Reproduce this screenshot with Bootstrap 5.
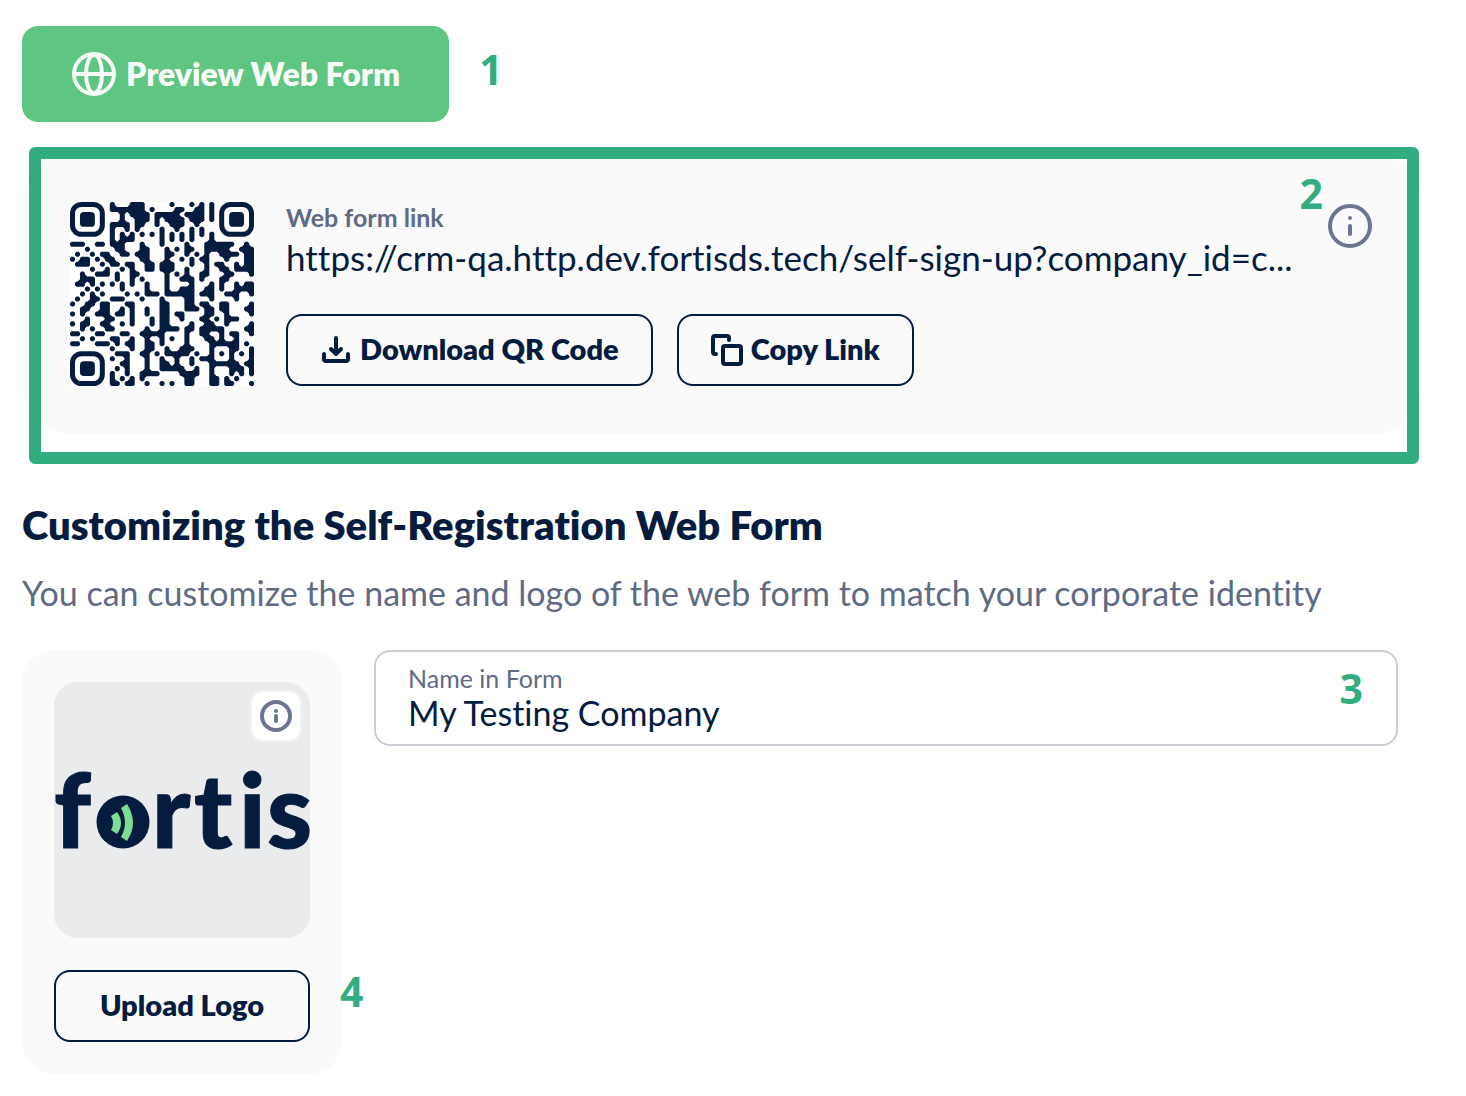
<!DOCTYPE html>
<html lang="en">
<head>
<meta charset="utf-8">
<meta name="viewport" content="width=device-width, initial-scale=1">
<title>Self-Registration Web Form</title>
<link href="https://cdn.jsdelivr.net/npm/bootstrap@5.3.0/dist/css/bootstrap.min.css" rel="stylesheet">
<style>
  :root { --navy: #051c3f; --slate: #5f6b84; --green: #5ec682; --note: #32ad80; --soft: #fafafa; }
  body { font-family: Lato, sans-serif; font-variant-ligatures: none; color: var(--navy); background: #fff; font-size: 34px; line-height: 40px; }
  .page { padding: 26px 44px 22px 22px; }
  .icon { flex: none; display: block; }
  .note { font: 700 41px/48px "Open Sans", sans-serif; color: var(--note); }
  .btn-preview { --bs-btn-bg: var(--green); --bs-btn-color: #f8fcf9; --bs-btn-hover-bg: #50b574; --bs-btn-hover-color: #fff; --bs-btn-border-color: transparent;
    height: 96px; padding: 0 49px 0 48px; border: 0; border-radius: 16px; font-size: 32px; font-weight: 800; }
  .btn-line { --bs-btn-color: var(--navy); --bs-btn-border-color: var(--navy); --bs-btn-hover-color: #fff; --bs-btn-hover-bg: var(--navy);
    --bs-btn-border-width: 2px; height: 72px; padding: 0 32px; border-radius: 16px; font-size: 29px; font-weight: 800; }
  .btn-line span { padding-bottom: 2px; }
  .link-panel { background: var(--soft); border-radius: 48px; padding: 48px; margin-top: 32px; gap: 32px; }
  .qr { width: 184px; height: 184px; background: #fff; }
  .link-label { font-size: 25px; line-height: 30px; padding-bottom: 2px; font-weight: 700; color: var(--slate); }
  .link-url { font-size: 35px; line-height: 46px; padding-bottom: 2px; color: var(--navy); }
  .highlight { position: absolute; inset: -7px 3px -30px 7px; border: 12px solid var(--note); border-radius: 6px; pointer-events: none; }
  .note-first { margin-left: 30px; padding-bottom: 10px; }
  .note-link { position: absolute; top: 15px; right: 99px; }
  .note-name { position: absolute; top: 12px; right: 33px; }
  .note-logo { position: absolute; top: 317px; left: 318px; }
  .info-btn { background: none; border: 0; padding: 0; color: #6b7791; }
  .section-title { font-size: 40px; line-height: 48px; font-weight: 800; margin: 67px 0 24px; }
  .section-text { color: var(--slate); margin-bottom: 37px; }
  .lower { gap: 32px; }
  .logo-panel { width: 320px; padding: 32px; background: var(--soft); border-radius: 32px; gap: 32px; }
  .logo-box { background: #e9ebec; border-radius: 24px; aspect-ratio: 1; }
  .logo-word { font: 900 102px/1 Lato, sans-serif; fill: var(--navy); stroke: var(--navy); stroke-width: 1; }
  .logo-info { position: absolute; top: 8px; right: 8px; background: #fff; border: 2px solid #f1f2f3; border-radius: 13px; padding: 8px; }
  .name-field { border: 2px solid #c9ced5; border-radius: 16px; height: 96px; padding: 10px 32px 8px; background: #fff; }
  .name-field label { font-size: 25px; line-height: 32px; color: var(--slate); }
  .name-field input { font-variant-ligatures: none; line-height: 42px; height: 42px; margin-top: -2px; padding: 0; border: 0; color: var(--navy); background: none; outline: 0; }
</style>
<script src="https://cdn.jsdelivr.net/npm/bootstrap@5.3.0/dist/js/bootstrap.bundle.min.js"></script>
</head>
<body>
<main class="page">
  <div class="d-flex align-items-center">
    <button type="button" class="btn btn-preview d-flex align-items-center gap-2">
      <svg class="icon" width="48" height="48" viewBox="0 0 48 48" fill="none" stroke="currentColor" stroke-width="4"><circle cx="24" cy="24" r="20"/><ellipse cx="24" cy="24" rx="8" ry="19"/><path d="M4 24h40"/></svg>
      <span>Preview Web Form</span>
    </button>
    <span class="note note-first">1</span>
  </div>

  <section class="link-panel d-flex position-relative">
    <svg class="qr icon" id="qr" viewBox="0 0 37 37" role="img" aria-label="QR code"></svg>
    <div class="flex-grow-1">
      <div class="link-label">Web form link</div>
      <a href="#" class="link-url d-block text-decoration-none text-nowrap">https://crm-qa.http.dev.fortisds.tech/self-sign-up?company_id=c...</a>
      <div class="d-flex gap-4 mt-4 pt-2">
        <button type="button" class="btn btn-line d-flex align-items-center gap-2">
          <svg class="icon" width="32" height="32" viewBox="0 0 32 32" fill="none" stroke="currentColor" stroke-width="4" stroke-linecap="round" stroke-linejoin="round"><path d="M16 4v16M11 15l5 5 5-5M4 20v5q0 2 2 2h20q2 0 2-2v-5"/></svg>
          <span>Download QR Code</span>
        </button>
        <button type="button" class="btn btn-line d-flex align-items-center gap-2">
          <svg class="icon" width="32" height="32" viewBox="0 0 32 32" fill="none" stroke="currentColor" stroke-width="4" stroke-linecap="round" stroke-linejoin="round"><rect x="12" y="12" width="18" height="18" rx="2"/><path d="M5 20H4q-2 0-2-2V4q0-2 2-2h12q2 0 2 2v2"/></svg>
          <span>Copy Link</span>
        </button>
      </div>
    </div>
    <button type="button" class="info-btn align-self-start" aria-label="About the link">
      <svg class="icon" width="48" height="48" viewBox="0 0 48 48" fill="none" stroke="currentColor" stroke-width="4" stroke-linecap="round"><circle cx="24" cy="24" r="20"/><path d="M24 24v8M24 16h.01"/></svg>
    </button>
    <div class="highlight"></div>
    <span class="note note-link">2</span>
  </section>

  <h1 class="section-title">Customizing the Self-Registration Web Form</h1>
  <p class="section-text">You can customize the name and logo of the web form to match your corporate identity</p>

  <div class="lower d-flex align-items-start position-relative pe-4">
    <section class="logo-panel d-flex flex-column flex-shrink-0">
      <div class="logo-box position-relative">
        <svg class="icon w-100 h-100 overflow-visible" viewBox="0 0 256 256" role="img" aria-label="fortis">
          <text class="logo-word" y="166"><tspan x="0">f</tspan><tspan x="98">r</tspan><tspan x="140">t</tspan><tspan x="185">i</tspan><tspan x="213">s</tspan></text>
          <circle cx="69" cy="140" r="26.5" fill="#051c3f"/>
          <g fill="#7cdd92"><path d="M57 134L63 130Q71 141 63 152L57 148Q61 141 57 134Z"/><path d="M67 126L73 122Q85 141 73 159L67 155Q75 141 67 126Z"/></g>
        </svg>
        <button type="button" class="info-btn logo-info" aria-label="About the logo">
          <svg class="icon" width="32" height="32" viewBox="0 0 32 32" fill="none" stroke="currentColor" stroke-width="4" stroke-linecap="round"><circle cx="16" cy="16" r="14"/><path d="M16 16v5M16 11h.01"/></svg>
        </button>
      </div>
      <button type="button" class="btn btn-line d-flex align-items-center justify-content-center"><span>Upload Logo</span></button>
    </section>
    <div class="name-field d-flex flex-column flex-grow-1 position-relative">
      <label for="formName">Name in Form</label>
      <input id="formName" type="text" value="My Testing Company">
      <span class="note note-name">3</span>
    </div>
    <span class="note note-logo">4</span>
  </div>
</main>
<script>
  // Dark modules of each row, outside the three finder squares.
  const rows = [
    [8,12,13,14,20,24,26,28],
    [8,9,10,11,12,13,14,16,21,22,25,26,28],
    [10,12,13,14,15,17,18,19,20,21,23,24,25,26,28],
    [10,13,14,15,17,19,20,21,22,24,25,26,28],
    [8,9,10,11,13,14,17,20,21,22,25],
    [8,11,13,18,21,24,26],
    [8,10,12,14,16,18,20,22,24,26,28],
    [8,10,11,12,18,20,22,24,28],
    [0,1,2,5,6,8,9,10,14,18,23,27,28,29,30,31,32,35],
    [3,9,10,14,15,19,21,23,24,27,28,29,30,31,34,35,36],
    [1,4,6,7,10,11,13,14,15,19,20,23,25,27,30,31,32,33,35,36],
    [0,2,3,5,7,8,14,15,19,22,24,26,27,31,35,36],
    [1,2,3,6,8,9,11,12,15,16,18,19,20,24,27,29,30,33,35,36],
    [4,7,10,12,15,16,18,19,20,23,27,30,31,33,34,35,36],
    [2,5,6,7,9,12,13,19,21,23,26,27,31,32,36],
    [2,3,4,9,12,14,19,22,23,24,26,30,31],
    [1,2,4,6,8,10,12,15,19,24,28,30,33,35,36],
    [3,5,10,15,19,22,23,24,27,28,30,33,34,35,36],
    [2,4,6,11,13,15,16,17,19,20,21,22,23,24,26,27,28,31,32,33,36],
    [1,4,5,8,9,10,14,18,23,24,28,33],
    [0,3,4,6,7,11,12,18,19,23,24,26,27,30,31,36],
    [2,3,6,7,10,12,15,18,19,23,24,25,27,28,30,31,35,36],
    [0,2,5,6,7,9,10,12,15,18,19,21,22,27,28,31,36],
    [3,7,8,12,16,18,19,22,26,27,29,31,32,33],
    [0,2,3,6,7,10,12,16,18,19,24,27,28,31,36],
    [2,4,7,8,15,18,19,20,21,23,24,26,27,28,29,30,35,36],
    [0,1,5,6,10,11,14,15,16,17,18,23,26,27,30,32,33,36],
    [2,4,8,9,12,15,18,20,23,27,28,30,33],
    [0,1,5,6,7,9,11,12,15,16,18,23,28,29,30,31,32,33,35],
    [8,12,15,16,19,22,23,24,28,32,33,36],
    [9,10,11,14,15,17,19,20,21,22,23,25,28,30,32,34,36],
    [8,11,15,18,21,24,26,27,28,32,36],
    [10,11,15,18,19,21,24,28,29,30,31,32,33,35,36],
    [9,11,15,18,19,20,21,22,25,28,32,33,34,36],
    [8,11,14,15,16,17,22,23,24,25,28,32,34,36],
    [8,10,12,14,23,24,28,29,31,33],
    [8,9,11,12,15,18,20,23,24,28,29,31,32,36]
  ];
  const on = (x, y) => !!rows[y] && rows[y].includes(x);
  let d = '';
  rows.forEach((r, y) => r.forEach(x => {
    const n = on(x, y - 1), s = on(x, y + 1), w = on(x - 1, y), e = on(x + 1, y);
    const c = (a, b) => (a || b ? 0 : .3);
    const tl = c(n, w), tr = c(n, e), br = c(s, e), bl = c(s, w);
    d += `M${x + tl} ${y}H${x + 1.02 - tr}L${x + 1.02} ${y + tr}V${y + 1.02 - br}L${x + 1.02 - br} ${y + 1.02}H${x + bl}L${x} ${y + 1.02 - bl}V${y + tl}Z`;
  }));
  // fillets where a light module lies inside a bend of three dark ones
  for (let y = 0; y < 37; y++) for (let x = 0; x < 37; x++) if (!on(x, y))
    for (const [i, j] of [[1, 1], [1, -1], [-1, 1], [-1, -1]])
      if (on(x + i, y) && on(x, y + j) && on(x + i, y + j)) {
        const px = x + (i > 0 ? 1 : 0), py = y + (j > 0 ? 1 : 0);
        const a = `L${px - i * .45} ${py}`, b = `L${px} ${py - j * .45}`;
        d += `M${px} ${py}` + (i * j > 0 ? a + b : b + a) + 'Z';
      }
  const finder = (x, y) => `<rect x="${x + .5}" y="${y + .5}" width="6" height="6" rx="1.8" fill="none" stroke="#051c3f"/><rect x="${x + 2}" y="${y + 2}" width="3" height="3" rx=".8" fill="#051c3f"/>`;
  document.getElementById('qr').innerHTML = `<path fill="#051c3f" d="${d}"/>` + finder(0, 0) + finder(30, 0) + finder(0, 30);
</script>
</body>
</html>
